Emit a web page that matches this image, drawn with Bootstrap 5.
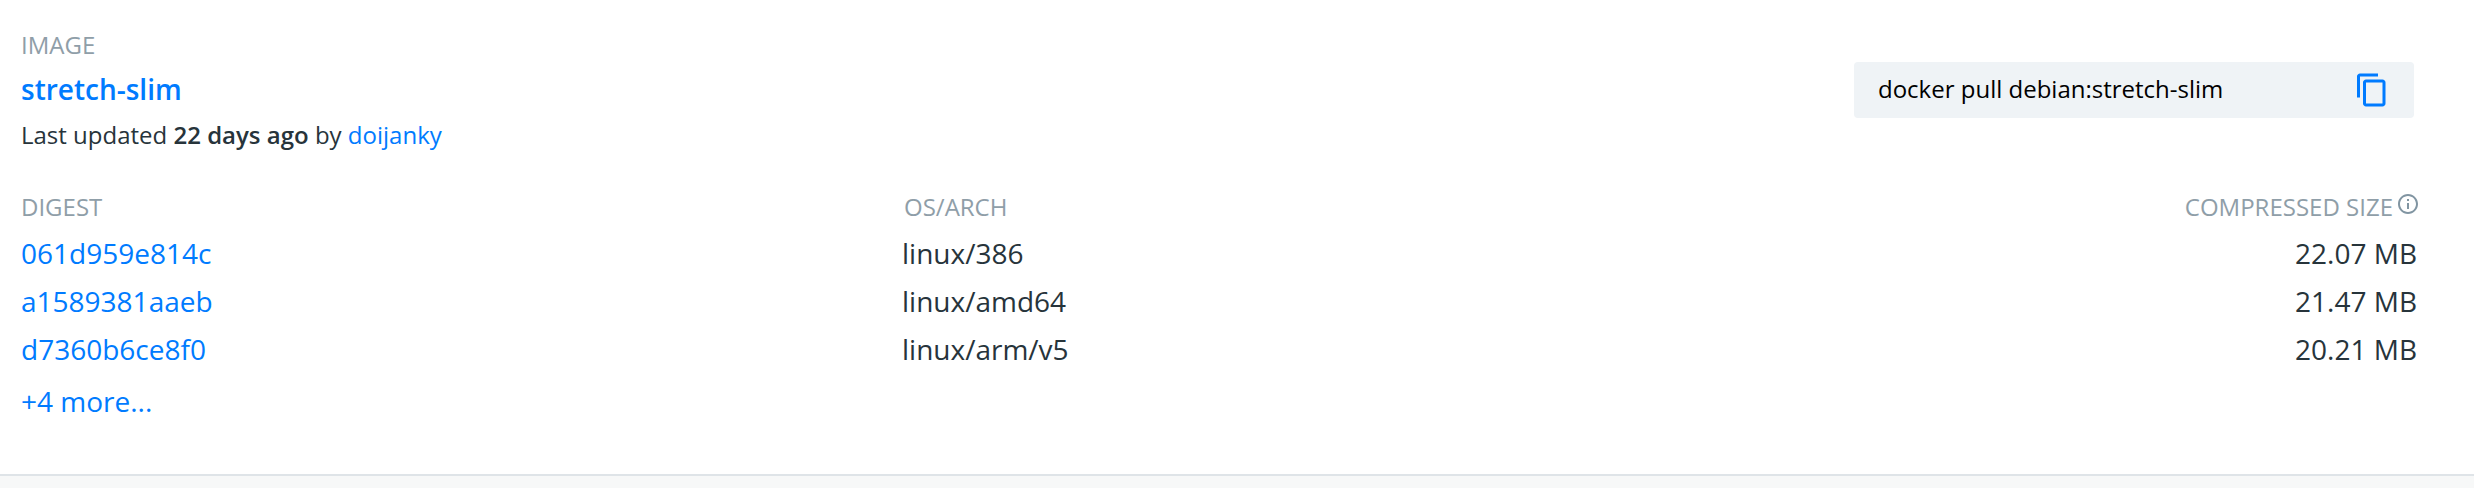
<!DOCTYPE html>
<html lang="en">
<head>
<meta charset="utf-8">
<title>stretch-slim</title>
<link href="https://cdn.jsdelivr.net/npm/bootstrap@5.3.0/dist/css/bootstrap.min.css" rel="stylesheet">
<style>
  body { font-family: "Open Sans", sans-serif; background: #f7f8f8; color: #27343b; font-size: 28px; line-height: 48px; height: 488px; overflow: hidden; }
  a { color: #007bff; text-decoration: none; }
  .tag-panel { height: 476px; border-bottom: 2px solid #dfe4e8; padding: 27px 57px 0 21px; }
  .label-text { color: #8f9ea8; font-size: 24px; line-height: 36px; }
  .tag-name { font-size: 28px; line-height: 42px; font-weight: 600; margin-top: 5px; }
  .updated { font-size: 24px; line-height: 36px; margin-top: 7px; }
  .updated b { font-weight: 600; }
  .pull-box { width: 560px; height: 56px; margin: 35px 3px 0 0; padding: 0 24px; background: #eff3f6; border-radius: 4px; color: #000; font-size: 24px; line-height: 36px; }
  .pull-box span { padding-bottom: 2px; }
  .digest-grid { display: grid; grid-template-columns: 881px 900px 1fr; margin-top: 36px; }
  .digest-grid .label-text { margin-bottom: 4px; }
  .arch-label { padding-left: 2px; }
  .info-icon { margin-top: 3px; margin-right: -3px; margin-left: 3px; }
  .more-link { margin-top: 4px; }
</style>
</head>
<body>
<main class="tag-panel bg-white">
  <header class="d-flex justify-content-between align-items-start">
    <div>
      <div class="label-text">IMAGE</div>
      <div class="tag-name"><a href="#">stretch-slim</a></div>
      <div class="updated">Last updated <b>22 days ago</b> by <a href="#">doijanky</a></div>
    </div>
    <div class="pull-box d-flex align-items-center justify-content-between">
      <span>docker pull debian:stretch-slim</span>
      <svg width="36" height="36" viewBox="0 0 24 24" fill="#007bff"><path d="M16 1H4c-1.1 0-2 .9-2 2v14h2V3h12V1zm3 4H8c-1.1 0-2 .9-2 2v14c0 1.1.9 2 2 2h11c1.1 0 2-.9 2-2V7c0-1.1-.9-2-2-2zm0 16H8V7h11v14z"/></svg>
    </div>
  </header>
  <section class="digest-grid">
    <div>
      <div class="label-text">DIGEST</div>
      <div><a href="#">061d959e814c</a></div>
      <div><a href="#">a1589381aaeb</a></div>
      <div><a href="#">d7360b6ce8f0</a></div>
    </div>
    <div>
      <div class="label-text arch-label">OS/ARCH</div>
      <div>linux/386</div>
      <div>linux/amd64</div>
      <div>linux/arm/v5</div>
    </div>
    <div class="text-end">
      <div class="label-text d-flex justify-content-end align-items-start">COMPRESSED SIZE<svg class="info-icon" width="24" height="24" viewBox="0 0 24 24" fill="#8195a2"><path d="M11 7h2v2h-2zm0 4h2v6h-2zm1-9C6.48 2 2 6.48 2 12s4.480 10 10 10 10-4.480 10-10S17.520 2 12 2zm0 18c-4.410 0-8-3.590-8-8s3.590-8 8-8 8 3.590 8 8-3.590 8-8 8z"/></svg></div>
      <div>22.07 MB</div>
      <div>21.47 MB</div>
      <div>20.21 MB</div>
    </div>
  </section>
  <div class="more-link"><a href="#">+4 more...</a></div>
</main>
<script src="https://cdn.jsdelivr.net/npm/bootstrap@5.3.0/dist/js/bootstrap.bundle.min.js"></script>
</body>
</html>
